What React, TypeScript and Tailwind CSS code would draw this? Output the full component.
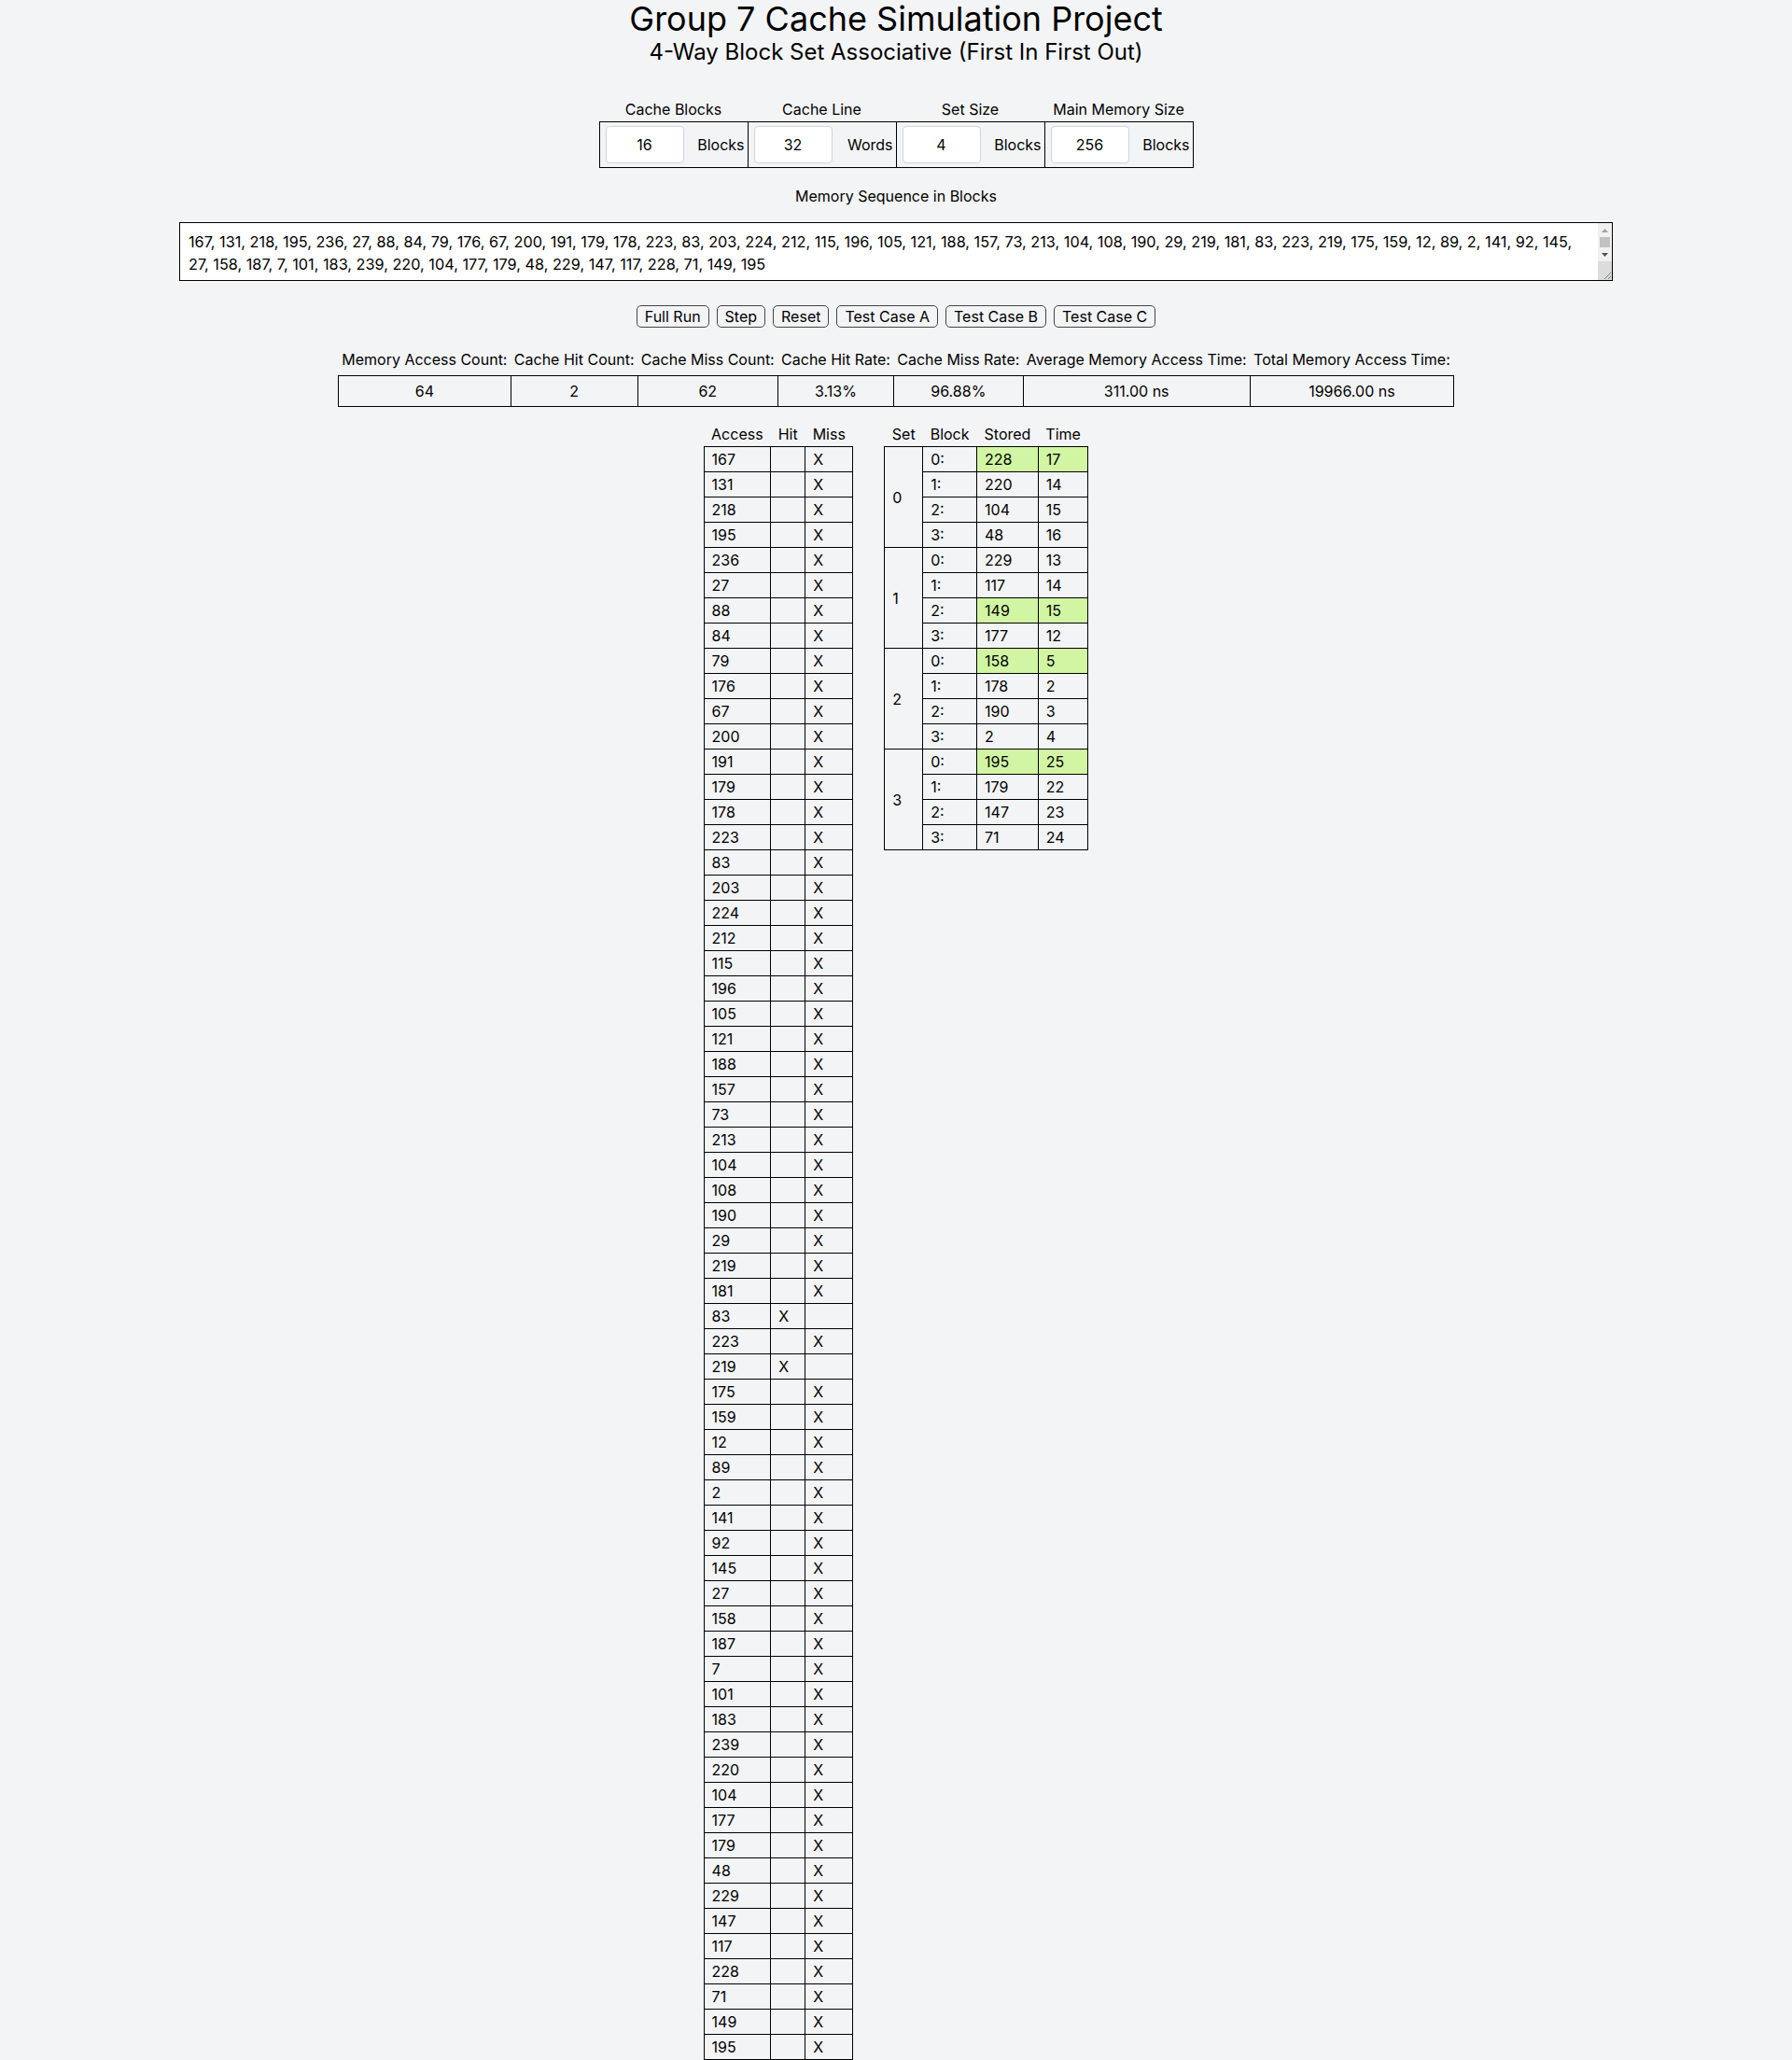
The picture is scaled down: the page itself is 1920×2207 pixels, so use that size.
import { useState } from "react";

const sequence = [
  167, 131, 218, 195, 236, 27, 88, 84, 79, 176, 67, 200, 191, 179, 178, 223,
  83, 203, 224, 212, 115, 196, 105, 121, 188, 157, 73, 213, 104, 108, 190, 29,
  219, 181, 83, 223, 219, 175, 159, 12, 89, 2, 141, 92, 145, 27, 158, 187, 7,
  101, 183, 239, 220, 104, 177, 179, 48, 229, 147, 117, 228, 71, 149, 195,
];

const hitIndexes = [34, 36];

type Block = { stored: number; time: number; latest?: boolean };

const cacheSets: Block[][] = [
  [
    { stored: 228, time: 17, latest: true },
    { stored: 220, time: 14 },
    { stored: 104, time: 15 },
    { stored: 48, time: 16 },
  ],
  [
    { stored: 229, time: 13 },
    { stored: 117, time: 14 },
    { stored: 149, time: 15, latest: true },
    { stored: 177, time: 12 },
  ],
  [
    { stored: 158, time: 5, latest: true },
    { stored: 178, time: 2 },
    { stored: 190, time: 3 },
    { stored: 2, time: 4 },
  ],
  [
    { stored: 195, time: 25, latest: true },
    { stored: 179, time: 22 },
    { stored: 147, time: 23 },
    { stored: 71, time: 24 },
  ],
];

const configFields = [
  { label: "Cache Blocks", value: "16", unit: "Blocks" },
  { label: "Cache Line", value: "32", unit: "Words" },
  { label: "Set Size", value: "4", unit: "Blocks" },
  { label: "Main Memory Size", value: "256", unit: "Blocks" },
];

const stats = [
  { label: "Memory Access Count:", value: "64" },
  { label: "Cache Hit Count:", value: "2" },
  { label: "Cache Miss Count:", value: "62" },
  { label: "Cache Hit Rate:", value: "3.13%" },
  { label: "Cache Miss Rate:", value: "96.88%" },
  { label: "Average Memory Access Time:", value: "311.00 ns" },
  { label: "Total Memory Access Time:", value: "19966.00 ns" },
];

const buttons = ["Full Run", "Step", "Reset", "Test Case A", "Test Case B", "Test Case C"];

const cell = "border border-black px-2 py-px leading-6 text-left";
const head = "px-2 py-px leading-6 text-left font-normal whitespace-nowrap";
const latestBg = "bg-[#d1f5a3]";

// fake classic scrollbar drawn over the textarea's right edge
const TextareaScrollbar = () => (
  <div className="pointer-events-none absolute top-px right-px bottom-px w-[15px] flex flex-col bg-[#f1f1f1]">
    <div className="h-[15px] flex items-center justify-center">
      <svg width="7" height="4" viewBox="0 0 7 4">
        <path d="M3.5 0 L7 4 L0 4 Z" fill="#a3a3a3" />
      </svg>
    </div>
    <div className="h-[11px] mx-[2px] bg-[#c1c1c1]" />
    <div className="h-[15px] flex items-center justify-center">
      <svg width="7" height="4" viewBox="0 0 7 4">
        <path d="M0 0 L7 0 L3.5 4 Z" fill="#505050" />
      </svg>
    </div>
    <div className="flex-1 bg-[#dcdcdc] flex items-end justify-end">
      <svg width="10" height="10" viewBox="0 0 10 10">
        <path d="M9 2 L2 9 M9 6 L6 9" stroke="#7a7a7a" strokeWidth="1" />
      </svg>
    </div>
  </div>
);

const App = () => {
  const [seqText, setSeqText] = useState(sequence.join(", "));

  return (
    <div className="min-h-screen bg-[#f3f4f6] text-black font-['Inter','Noto_Sans',sans-serif] text-base">
      <div className="flex flex-col items-center">
        <h1 className="text-4xl leading-10 font-normal">Group 7 Cache Simulation Project</h1>
        <h2 className="text-2xl leading-8 font-normal">
          4-Way Block Set Associative (First In First Out)
        </h2>

        {/* cache settings */}
        <table className="mt-8 border-collapse">
          <thead>
            <tr>
              {configFields.map((f) => (
                <th key={f.label} className="w-[159px] py-px leading-6 text-center font-normal">
                  {f.label}
                </th>
              ))}
            </tr>
          </thead>
          <tbody>
            <tr>
              {configFields.map((f) => (
                <td key={f.label} className="border border-black p-0">
                  <div className="flex items-center justify-between pl-[6px] pr-[3px] py-1">
                    <input
                      defaultValue={f.value}
                      className="w-[84px] h-10 bg-white border border-[#d4d4d4] rounded text-center"
                    />
                    <span>{f.unit}</span>
                  </div>
                </td>
              ))}
            </tr>
          </tbody>
        </table>

        <div className="mt-[18px] leading-6">Memory Sequence in Blocks</div>
        <div className="relative mt-4 w-[80%] h-[63px]">
          <textarea
            value={seqText}
            onChange={(e) => setSeqText(e.target.value)}
            className="block w-full h-full bg-white border border-black pl-[9px] pr-[24px] py-[8px] text-[16.25px] leading-6 resize-none overflow-hidden"
          />
          <TextareaScrollbar />
        </div>

        <div className="mt-[26px] flex gap-2">
          {buttons.map((b) => (
            <button
              key={b}
              className="h-6 border border-[#444] rounded-[5px] px-2 leading-[22px]"
            >
              {b}
            </button>
          ))}
        </div>

        {/* stats */}
        <table className="mt-5 border-collapse">
          <thead>
            <tr>
              {stats.map((s) => (
                <th key={s.label} className="px-[3.7px] pt-0.5 pb-[5px] leading-6 text-left font-normal whitespace-nowrap">
                  {s.label}
                </th>
              ))}
            </tr>
          </thead>
          <tbody>
            <tr>
              {stats.map((s) => (
                <td key={s.label} className="border border-black px-1 py-1 leading-6 text-center">
                  {s.value}
                </td>
              ))}
            </tr>
          </tbody>
        </table>

        {/* access log + cache contents */}
        <div className="mt-4 flex items-start gap-[33px]">
          <table className="border-collapse">
            <thead>
              <tr>
                <th className={head}>Access</th>
                <th className={head}>Hit</th>
                <th className={head}>Miss</th>
              </tr>
            </thead>
            <tbody>
              {sequence.map((n, i) => {
                const hit = hitIndexes.includes(i);
                return (
                  <tr key={i}>
                    <td className={cell}>{n}</td>
                    <td className={cell}>{hit ? "X" : ""}</td>
                    <td className={cell}>{hit ? "" : "X"}</td>
                  </tr>
                );
              })}
            </tbody>
          </table>

          <table className="border-collapse">
            <thead>
              <tr>
                <th className={head}>Set</th>
                <th className={head}>Block</th>
                <th className={head}>Stored</th>
                <th className={head}>Time</th>
              </tr>
            </thead>
            <tbody>
              {cacheSets.map((set, s) =>
                set.map((blk, b) => (
                  <tr key={`${s}-${b}`}>
                    {b === 0 && (
                      <td rowSpan={4} className={cell}>
                        {s}
                      </td>
                    )}
                    <td className={cell}>{b}:</td>
                    <td className={`${cell} ${blk.latest ? latestBg : ""}`}>{blk.stored}</td>
                    <td className={`${cell} ${blk.latest ? latestBg : ""}`}>{blk.time}</td>
                  </tr>
                ))
              )}
            </tbody>
          </table>
        </div>
      </div>
    </div>
  );
};

export default App;
